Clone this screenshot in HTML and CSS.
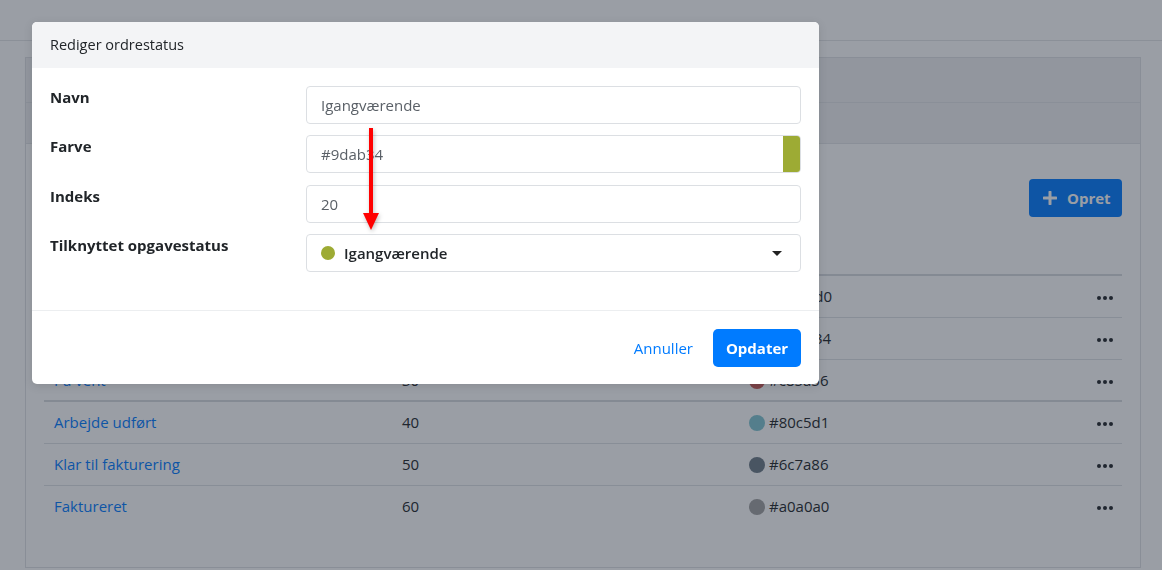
FILE: index.html
```html
<!DOCTYPE html>
<html lang="da">
<head>
<meta charset="utf-8">
<title>Ordrestatus</title>
<link rel="stylesheet" href="styles.css">
</head>
<body>
<div class="page">
  <header class="topbar"></header>
  <main class="content">
    <section class="card">
      <div class="card-header">Ordrestatusser</div>
      <div class="card-tabs"><span class="tab">Oversigt</span></div>
      <div class="card-body">
        <div class="toolbar">
          <button class="btn-create" type="button">
            <svg class="plus" viewBox="0 0 14 14" width="14" height="14"><path d="M7 1v12M1 7h12" stroke="currentColor" stroke-width="3" stroke-linecap="round"/></svg>
            <span>Opret</span>
          </button>
        </div>
        <table class="status-table">
          <thead>
            <tr><th class="c-name">Navn</th><th class="c-idx">Indeks</th><th class="c-color">Farve</th><th class="c-act"></th></tr>
          </thead>
          <tbody>
            <tr><td class="c-name"><a href="#">Ny</a></td><td>10</td><td><span class="dot" style="background:#5b9bd5"></span>#5b9bd0</td><td class="c-act"><svg class="more" viewBox="0 0 16 4" width="16" height="4"><circle cx="2" cy="2" r="2"/><circle cx="8" cy="2" r="2"/><circle cx="14" cy="2" r="2"/></svg></td></tr>
            <tr><td class="c-name"><a href="#">Igangværende</a></td><td>20</td><td><span class="dot" style="background:#9dab34"></span>#9dab34</td><td class="c-act"><svg class="more" viewBox="0 0 16 4" width="16" height="4"><circle cx="2" cy="2" r="2"/><circle cx="8" cy="2" r="2"/><circle cx="14" cy="2" r="2"/></svg></td></tr>
            <tr><td class="c-name"><a href="#">På vent</a></td><td>30</td><td><span class="dot" style="background:#c85a56"></span>#c85a56</td><td class="c-act"><svg class="more" viewBox="0 0 16 4" width="16" height="4"><circle cx="2" cy="2" r="2"/><circle cx="8" cy="2" r="2"/><circle cx="14" cy="2" r="2"/></svg></td></tr>
          </tbody>
          <tbody class="group">
            <tr><td class="c-name"><a href="#">Arbejde udført</a></td><td>40</td><td><span class="dot" style="background:#80c5d1"></span>#80c5d1</td><td class="c-act"><svg class="more" viewBox="0 0 16 4" width="16" height="4"><circle cx="2" cy="2" r="2"/><circle cx="8" cy="2" r="2"/><circle cx="14" cy="2" r="2"/></svg></td></tr>
            <tr><td class="c-name"><a href="#">Klar til fakturering</a></td><td>50</td><td><span class="dot" style="background:#6c7a86"></span>#6c7a86</td><td class="c-act"><svg class="more" viewBox="0 0 16 4" width="16" height="4"><circle cx="2" cy="2" r="2"/><circle cx="8" cy="2" r="2"/><circle cx="14" cy="2" r="2"/></svg></td></tr>
            <tr><td class="c-name"><a href="#">Faktureret</a></td><td>60</td><td><span class="dot" style="background:#a0a0a0"></span>#a0a0a0</td><td class="c-act"><svg class="more" viewBox="0 0 16 4" width="16" height="4"><circle cx="2" cy="2" r="2"/><circle cx="8" cy="2" r="2"/><circle cx="14" cy="2" r="2"/></svg></td></tr>
          </tbody>
        </table>
      </div>
    </section>
  </main>
</div>

<div class="backdrop"></div>

<div class="modal" role="dialog">
  <div class="modal-header">Rediger ordrestatus</div>
  <div class="modal-body">
    <div class="form-row">
      <label class="form-label">Navn</label>
      <div class="input">Igangværende</div>
    </div>
    <div class="form-row">
      <label class="form-label">Farve</label>
      <div class="input input-color"><span class="input-text">#9dab34</span><span class="swatch"></span></div>
    </div>
    <div class="form-row row-shift">
      <label class="form-label">Indeks</label>
      <div class="input">20</div>
    </div>
    <div class="form-row">
      <label class="form-label">Tilknyttet opgavestatus</label>
      <div class="input select"><span class="sel-dot"></span><span class="sel-text">Igangværende</span><span class="caret"></span></div>
    </div>
    <svg class="arrow" viewBox="0 0 20 104" width="20" height="104">
      <rect x="8" y="0" width="4" height="88" fill="#ff0000"/>
      <polygon points="2,85 18,85 10,102" fill="#ff0000"/>
    </svg>
  </div>
  <div class="modal-footer">
    <a class="btn-link" href="#">Annuller</a>
    <button class="btn-primary" type="button">Opdater</button>
  </div>
</div>
</body>
</html>
```

FILE: styles.css
```css
* { box-sizing: border-box; }

html, body {
  margin: 0;
  padding: 0;
}

body {
  font-family: "Open Sans", "Noto Sans", "Liberation Sans", sans-serif;
  font-size: 15px;
  line-height: 24px;
  color: #212529;
  background: #ffffff;
  width: 1162px;
  height: 570px;
  overflow: hidden;
}

.page {
  display: flex;
  flex-direction: column;
}

.topbar {
  height: 41px;
  background: #ffffff;
  border-bottom: 1px solid #e3e5e8;
}

.content {
  padding: 16px 21px 0 25px;
}

.card {
  border: 1px solid #e0e2e5;
  background: #ffffff;
  height: 511px;
}

.card-header {
  height: 45px;
  background: #f0f1f3;
  border-bottom: 1px solid #e2e4e7;
  padding: 10px 20px;
  font-weight: 600;
}

.card-tabs {
  height: 41px;
  background: #f0f1f3;
  border-bottom: 1px solid #e2e4e7;
  padding: 8px 20px;
}

.card-body {
  padding: 35px 18px 0 18px;
}

.toolbar {
  display: flex;
  justify-content: flex-end;
  margin-bottom: 18px;
}

.btn-create {
  display: flex;
  align-items: center;
  gap: 10px;
  height: 38px;
  width: 93px;
  padding: 0 14px;
  border: none;
  border-radius: 4px;
  background: #007bff;
  color: #ffffff;
  font-family: inherit;
  font-size: 15px;
  font-weight: 700;
}

.plus { flex: none; }

.status-table {
  width: 100%;
  border-collapse: collapse;
}

.status-table th,
.status-table td {
  height: 42px;
  padding: 0 10px;
  text-align: left;
  vertical-align: middle;
  border-top: 1px solid #dee2e6;
  font-weight: 400;
}

.status-table thead th {
  height: 40px;
  border-top: none;
  border-bottom: 2px solid #d7dadf;
  font-weight: 700;
}

.status-table .c-name { width: 348px; }
.status-table th:nth-child(2),
.status-table td:nth-child(2) { width: 347px; }

.status-table tbody.group tr:first-child td {
  border-top: 2px solid #d7dadf;
}

.status-table .c-act {
  width: 50px;
  text-align: right;
  padding-right: 9px;
}

.status-table a {
  color: #007bff;
  text-decoration: none;
}

.dot {
  display: inline-block;
  width: 16px;
  height: 16px;
  border-radius: 50%;
  vertical-align: -3px;
  margin-right: 4px;
}

.more {
  fill: #212529;
  display: inline-block;
  vertical-align: middle;
}

.backdrop {
  position: fixed;
  inset: 0;
  background: rgba(31, 41, 55, 0.45);
  z-index: 10;
}

.modal {
  position: fixed;
  top: 22px;
  left: 32px;
  width: 787px;
  background: #ffffff;
  border-radius: 5px;
  overflow: hidden;
  z-index: 20;
  box-shadow: 0 2px 10px rgba(0, 0, 0, 0.12);
}

.modal-header {
  height: 46px;
  background: #f3f4f6;
  padding: 0 18px;
  display: flex;
  align-items: center;
  font-size: 14.5px;
  color: #212529;
}

.modal-body {
  position: relative;
  padding: 18px 18px 38px 18px;
  display: flex;
  flex-direction: column;
  gap: 11px;
}

.form-row {
  display: grid;
  grid-template-columns: 256px 1fr;
  align-items: start;
}

.row-shift {
  margin-top: 1px;
}

.form-label {
  font-weight: 700;
  font-size: 15px;
  line-height: 22px;
  padding-top: 0;
  color: #212529;
}

.input {
  height: 38px;
  border: 1px solid #dcdfe3;
  border-radius: 4px;
  padding: 0 14px;
  display: flex;
  align-items: center;
  color: #5a6067;
  font-size: 15px;
}

.input-color {
  padding-right: 0;
  overflow: hidden;
}

.input-text { flex: 1; }

.swatch {
  width: 17px;
  align-self: stretch;
  background: #9dab34;
}

.select {
  color: #212529;
  font-weight: 600;
}

.sel-dot {
  width: 14px;
  height: 14px;
  border-radius: 50%;
  background: #9dab34;
  margin-right: 9px;
  flex: none;
}

.sel-text { flex: 1; }

.caret {
  width: 0;
  height: 0;
  border-left: 5px solid transparent;
  border-right: 5px solid transparent;
  border-top: 5px solid #222;
  margin-right: 4px;
}

.arrow {
  position: absolute;
  left: 329px;
  top: 60px;
  filter: drop-shadow(1px 2px 2px rgba(0, 0, 0, 0.25));
}

.modal-footer {
  border-top: 1px solid #eceef0;
  height: 74px;
  padding: 0 18px;
  display: flex;
  justify-content: flex-end;
  align-items: center;
  gap: 20px;
}

.btn-link {
  color: #007bff;
  text-decoration: none;
  font-size: 15px;
}

.btn-primary {
  height: 38px;
  width: 88px;
  border: none;
  border-radius: 5px;
  background: #007bff;
  color: #ffffff;
  font-family: inherit;
  font-size: 15px;
  font-weight: 700;
}
```
